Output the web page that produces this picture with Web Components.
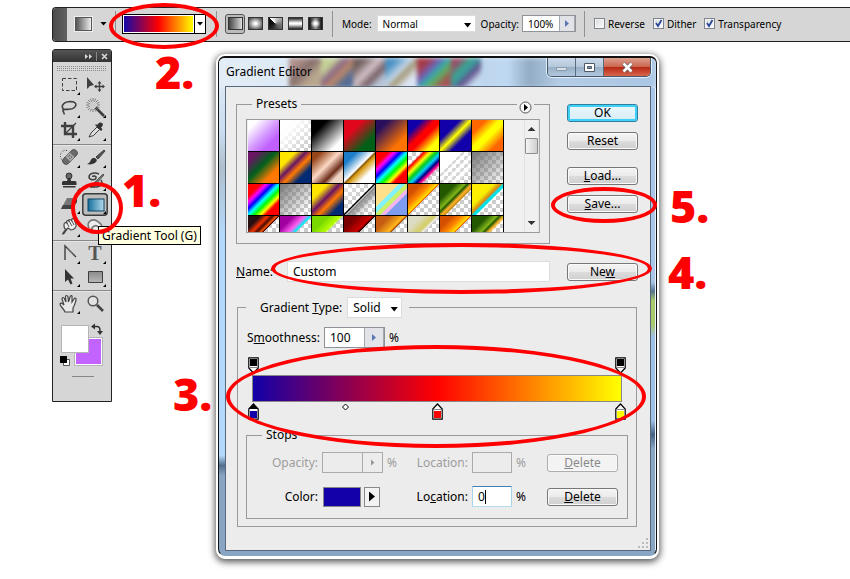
<!DOCTYPE html>
<html lang="en">
<head>
<meta charset="utf-8">
<title>Gradient Editor</title>
<style>
body{margin:0;background:#fff;color:#000;font:12px/16px "Noto Sans","Open Sans",sans-serif;overflow:hidden}
</style>
</head>
<body>
<work-desktop></work-desktop>
<script>
const define=(name,html,setup)=>customElements.define(name,class extends HTMLElement{
  connectedCallback(){
    if(this.shadowRoot)return;
    const t=document.createElement('template');
    t.innerHTML='<style>*{box-sizing:border-box}button,input,select{font:inherit;color:inherit;margin:0}</style>'+html;
    this.attachShadow({mode:'open'}).append(t.content.cloneNode(true));
    if(setup)setup(this,this.shadowRoot);
  }
});

/* ---------- shared controls ---------- */
define('push-button',`<style>
:host{display:block;height:18px}
button{display:block;width:100%;height:18px;padding:0;line-height:16px;border:1px solid #777;border-radius:3px;background:linear-gradient(#f4f4f4,#ebebeb 48%,#dcdcdc 52%,#cfcfcf);box-shadow:inset 0 0 0 1px #fafafa;color:#000}
:host([primary]) button{border-color:#2f7f9f;box-shadow:inset 0 0 0 2px #3fd0f8;background:linear-gradient(#eef8fd,#d5ecf6)}
:host([off]) button{border-color:#adadad;background:#f3f3f3;color:#8a8a8a}
</style><button type="button"><slot></slot></button>`,(h,r)=>{if(h.hasAttribute('off'))r.querySelector('button').disabled=true});

define('spin-field',`<style>
:host{display:block}
label{display:flex;align-items:center;gap:var(--gap,4px)}
.box{display:flex;width:var(--w,61px);height:var(--h,21px);border:1px solid #8f9399;background:#fff}
input{flex:1;min-width:0;border:0;outline:0;padding:0 0 0 5px;background:transparent}
button{width:var(--b,20px);padding:0;border:1px solid #a3a8ae;border-width:0 1px 0 1px;background:#e1e3e8;display:grid;place-items:center}
i{width:4px;height:7px;background:#5b76b5;clip-path:polygon(0 0,100% 50%,0 100%)}
</style><label><span><slot></slot></span><span class="box"><input><button type="button" aria-label="Slider"><i></i></button></span><slot name="unit"></slot></label>`,
(h,r)=>{r.querySelector('input').value=h.getAttribute('value')||''});

define('choice-field',`<style>
:host{display:block}
label{display:flex;align-items:center;gap:5px}
.box{position:relative;width:var(--w);height:var(--h)}
select{appearance:none;width:100%;height:100%;padding:0 0 0 var(--pl,5px);border:1px solid #dcdcdc;border-radius:0;background:#fff;outline:0}
.box::after{content:"";position:absolute;right:4px;top:50%;margin-top:-1px;width:8px;height:5px;background:#000;clip-path:polygon(0 0,100% 0,50% 100%);pointer-events:none}
</style><label><span><slot></slot></span><span class="box"><select></select></span></label>`,
(h,r)=>{r.querySelector('select').add(new Option(h.getAttribute('value')))});

define('check-option',`<style>
:host{display:block}
label{display:flex;align-items:center;gap:3px}
input{appearance:none;width:11px;height:11px;border:1px solid #7d868f;background:linear-gradient(135deg,#d5d9de,#fff);box-shadow:inset 0 0 0 1px #f6f6f6}
.b{display:grid;place-items:center}
.b>*{grid-area:1/1}
svg{display:none;pointer-events:none}
input:checked+svg{display:block}
</style><label><span class="b"><input type="checkbox"><svg width="9" height="9"><path d="M2 4l2 3 3.500-6" fill="none" stroke="#2c4899" stroke-width="1.800"/></svg></span><slot></slot></label>`,
(h,r)=>{r.querySelector('input').checked=h.hasAttribute('on')});

/* ---------- options bar ---------- */
define('options-bar',`<style>
:host{display:flex;height:35px;border:1px solid #222;border-right:0;border-radius:4px 0 0 4px;background:#d6d6d6;font-size:10px;align-items:center;overflow:hidden;white-space:nowrap;padding-bottom:2px}
.grip{align-self:stretch;width:14px;margin-bottom:-2px;background:linear-gradient(90deg,#4c4c4c,#626262)}
.preset{display:flex;align-items:center;gap:8px;padding:0 9px 0 8px;border:0;background:none}
.preset i{width:17px;height:14px;border:1px solid #555;background:linear-gradient(90deg,#555,#eee);box-shadow:0 0 0 1px #eee}
b{width:7px;height:4px;background:#000;clip-path:polygon(0 0,100% 0,50% 100%)}
hr{width:1px;height:26px;margin:0;border:0;background:#909090}
.ramp{display:flex;margin:0 10px 0 6px;width:84px;height:20px;padding:0;border:1px solid #000;background:#fff}
.ramp i{flex:1;margin:1px;background:linear-gradient(90deg,#1408a8,#f00 50%,#ff0)}
.ramp span{width:11px;display:grid;place-items:center;border-left:1px solid #000}
.preset{margin-right:-1px}
.kinds{display:flex;align-items:center;padding:0 7px 0 8px}
.kinds button{width:20px;height:20px;padding:0;border:1px solid transparent;border-radius:3px;background:none;display:grid;place-items:center}
.kinds button.on{border-color:#555;background:#bbb}
.kinds i{width:15px;height:13px;border:1px solid #333}
.mode{--w:99px;--h:17px;margin-left:9px}
.op{--w:54px;--h:17px;--b:16px;--gap:3px;margin:0 8px 0 5px}
.checks{display:flex;gap:8px;margin-left:9px}
</style>
<div class="grip"></div>
<button class="preset" type="button" aria-label="Tool preset"><i></i><b></b></button><hr>
<button class="ramp" type="button" aria-label="Edit gradient"><i></i><span><b></b></span></button><hr>
<div class="kinds">
<button class="on" type="button" aria-label="Linear"><i style="background:linear-gradient(90deg,#444,#ddd)"></i></button>
<button type="button" aria-label="Radial"><i style="background:radial-gradient(#fff 10%,#555 85%)"></i></button>
<button type="button" aria-label="Angle"><i style="background:conic-gradient(from -45deg,#fff 0,#777 40%,#111 85%,#111)"></i></button>
<button type="button" aria-label="Reflected"><i style="background:linear-gradient(#222,#fff 45% 55%,#222)"></i></button>
<button type="button" aria-label="Diamond"><i style="background:radial-gradient(#fff 10%,transparent 55%),linear-gradient(90deg,#111,#999,#111)"></i></button>
</div><hr>
<choice-field class="mode" value="Normal">Mode:</choice-field>
<spin-field class="op" value="100%">Opacity:</spin-field><hr>
<div class="checks"><check-option>Reverse</check-option><check-option on>Dither</check-option><check-option on>Transparency</check-option></div>`);

/* ---------- tool box ---------- */
const D='#3f3f3f';
const tools={
marquee:['Marquee',`<path d="M6.500 4.500h14v12h-14z" fill="none" stroke="${D}" stroke-dasharray="3.500 2"/>`],
move:['Move',`<path d="M5 3v12l3-3 4-1z" fill="${D}"/><path d="M17.500 8v9M13 12.500h9" stroke="${D}" stroke-width="1.300"/><path d="M15.500 9.500l2-2.500 2 2.500zM15.500 15.500l2 2.500 2-2.500zM14.500 10.500l-2.500 2 2.500 2zM20.500 10.500l2.500 2-2.500 2z" fill="${D}"/>`,1],
lasso:['Lasso',`<path d="M9 13C4 11 6 5 14 4.500c9 0 7 7-1 7.800-3 .4-5-.6-6 .7s2 2.500 1 4.500" fill="none" stroke="${D}" stroke-width="1.600"/>`],
wand:['Magic Wand',`<path d="M12 9l10 10" stroke="${D}" stroke-width="2.600"/><circle cx="11" cy="8" r="3.500" fill="#ddd"/><path d="M11 1v14M4 8h14M6 3l10 10M16 3L6 13M8.300 1.500l5.400 13M13.700 1.500l-5.400 13M4.500 5.300l13 5.400M4.500 10.700l13-5.400" stroke="#6b6b6b" stroke-width=".8" stroke-dasharray="3.500 7.500"/><circle cx="11" cy="8" r="3" fill="#ccc"/>`],
crop:['Crop',`<path d="M9 2v12h12M5 6h12v12" fill="none" stroke="${D}" stroke-width="2.400"/><path d="M9 14L20 3" stroke="${D}" stroke-width="1.200"/>`],
dropper:['Eyedropper',`<path d="M7 17l2-4 6-6 2.500 2.500-6 6z" fill="#ddd" stroke="${D}"/><path d="M13 5l6 6 1.500-1.500-1.500-2c3-2 2-5-.5-5-2 0-2.500 1.500-3.500 2.500l-.8-.8z" fill="#333"/>`],
heal:['Healing Brush',`<path d="M11 3.500c-5-1-7 3-6.500 6s2 5 4 5.500" fill="none" stroke="${D}" stroke-dasharray="1 1.500"/><g transform="rotate(-45 14 10)"><rect x="5" y="6.500" width="18" height="7" rx="3.500" fill="#6b6b6b" stroke="#444" stroke-width=".8"/><rect x="11" y="6.500" width="6" height="7" fill="#aaa"/><path d="M12.500 8.500h3M12.500 11h3" stroke="#444" stroke-dasharray="1 1"/></g>`],
brush:['Brush',`<path d="M14 10l8-7 1 1-7 8z" fill="#555" stroke="${D}"/><path d="M5 17c4-1 3-5 6-6 3-.5 5 2 3 4s-6 3-9 2z" fill="#333"/>`],
stamp:['Clone Stamp',`<circle cx="13" cy="6" r="3" fill="#666" stroke="#333"/><path d="M12 8h2.500l.5 3h4q1.500 0 1.500 1.500V15H6v-2.500Q6 11 7.500 11H11zM7 16h12.500v1.500H7z" fill="#333"/>`],
history:['History Brush',`<path d="M17 4c-4-2-10-1-10 3 0 3 6 4 7 1 .5-2-3-3-3.500-1M8 17h7c5-1 6-4 4-7" fill="none" stroke="${D}" stroke-width="1.500"/><path d="M12 13l9-9 1 1-8 9z" fill="#777" stroke="#333" stroke-width=".7"/><path d="M8 17c2-1 2-4 5-3 2 1 0 4-5 3z" fill="#333"/>`],
eraser:['Eraser',`<path d="M5 16l6-11h10l-5 11z" fill="#777"/><path d="M5 16l2-4h10l-2 4z" fill="#444"/><path d="M17 12l4-7v4l-5 7z" fill="#333"/>`],
gradient:['Gradient',`<defs><linearGradient id="g"><stop stop-color="#146f9d"/><stop offset="1" stop-color="#b5dced"/></linearGradient></defs><rect x=".8" y=".8" width="24.400" height="21.400" rx="3" fill="#bcbcbc" stroke="#3a3a3a" stroke-width="1.500"/><rect x="6" y="6" width="16" height="12" fill="url(#g)" stroke="#0d4460"/>`],
smudge:['Smudge',`<path d="M7 17c-1 2 1 1 2-1l3-4 3 2c3 0 6-3 5-6L18 3c-2-1-3 0-2 2-2-2-4-2-3 0-2-1-3 0-2 2-2-1-3 0-3 2 0 3 1 4 2 4z" fill="#eee" stroke="#444" stroke-width="1.200"/><path d="M13 5l3 5M11 7l2 4M16 5l2 4" stroke="#555"/>`],
dodge:['Dodge',`<path d="M7 12c-3-6 3-10 8-7s6 6 4 9-8 3-9 0 4-6 6-3" fill="#eee" stroke="#777" stroke-width="1.600"/>`],
pen:['Pen',`<path d="M9 17V3l11 11" fill="none" stroke="${D}" stroke-width="1.400"/><path d="M10 4l9 8-5-3z" fill="#777"/>`],
type:['Type',`<text x="13" y="17" text-anchor="middle" font-family="Liberation Serif,serif" font-size="20" font-weight="700" fill="#555">T</text>`],
select:['Path Selection',`<path d="M9 3v13l3-2.500 2.500 5 2-1-2-5H18z" fill="#333"/>`],
shape:['Rectangle',`<defs><linearGradient id="s" x2="0" y2="1"><stop stop-color="#8b8b8b"/><stop offset="1" stop-color="#b7b7b7"/></linearGradient></defs><path d="M6.500 5.500h14v11h-14z" fill="url(#s)" stroke="${D}"/>`],
hand:['Hand',`<path d="M9 19c-1-3-5-6-5-8 1-2 3 0 4 1L6 6c0-2 2-2 2.500 0L10 9 9.500 4c0-2 2-2 2.500 0l.5 5L14 4c.5-2 2.500-1.500 2 0v5l2-3c1-1.500 2.500-.5 2 1-1 4-1 5-3 8v4z" fill="#e8e8e8" stroke="#444" stroke-width="1.200"/>`],
zoom:['Zoom',`<path d="M15 12l6 6" stroke="#444" stroke-width="2.600"/><circle cx="11" cy="8" r="4.800" fill="#e3e3e3" stroke="#555" stroke-width="1.500"/>`,1]};

define('tool-button',`<style>
:host{display:block}
button{display:block;width:100%;height:23px;padding:0;border:0;background:none}
svg{display:block}
</style><button type="button"></button>`,(h,r)=>{
  const [label,art,plain]=tools[h.getAttribute('tool')],b=r.querySelector('button');
  b.setAttribute('aria-label',label);
  b.innerHTML=`<svg width="26" height="23">${art}${plain?'':'<path d="M24 18v3h-3z" fill="#000"/>'}</svg>`;
});

define('tool-box',`<style>
:host{display:block;border:1px solid #222;border-radius:3px 3px 0 0;background:#d6d6d6}
header{display:flex;height:12px;align-items:center;justify-content:flex-end;background:linear-gradient(#555,#333);padding-right:3px}
.dots{display:block;margin:4px auto 3px}
.group{display:grid;grid-template-columns:26px 26px;padding:0 3px 1px}
.group+.group{border-top:1px solid #888;box-shadow:inset 0 1px #e6e6e6;padding-top:2px}
.colors{display:block;margin:2px auto 0;width:50px}
</style>
<header><svg width="24" height="9"><path d="M1 2l3 2.500L1 7zM5 2l3 2.500L5 7z" fill="#ddd"/><path d="M12.500 0v9" stroke="#888"/><path d="M18 2l5 5M23 2l-5 5" stroke="#ddd" stroke-width="1.500"/></svg></header>
<svg class="dots" width="50" height="5"><path d="M0 .5h50M0 2.500h50M0 4.500h50" stroke="#8a8a8a" stroke-dasharray="1 1"/></svg>
<div class="group"></div><div class="group"></div><div class="group"></div><div class="group"></div>
<svg class="colors" width="50" height="82">
<path d="M18.500 19.500h26v26h-26z" fill="#c263ff" stroke="#fff"/><path d="M17.500 18.500h28v28h-28z" fill="none" stroke="#b5b5b5"/>
<path d="M4.500 6.500h27v27h-27z" fill="#fff" stroke="#b5b5b5"/>
<path d="M37 7.500h3q3 0 3 4v3" fill="none" stroke="#333" stroke-width="1.500"/><path d="M34 7.500l4-3v6zM40 12h6l-3 4z" fill="#333"/>
<path d="M6.500 40.500h6v6h-6z" fill="#fff" stroke="#555"/><path d="M3 37h7v7H3z" fill="#000"/>
<path d="M15 57.500h22" stroke="#888"/>
</svg>`,(h,r)=>{
  const sets=[['marquee','move','lasso','wand','crop','dropper'],['heal','brush','stamp','history','eraser','gradient','smudge','dodge'],['pen','type','select','shape'],['hand','zoom']];
  r.querySelectorAll('.group').forEach((g,i)=>g.innerHTML=sets[i].map(t=>`<tool-button tool="${t}"></tool-button>`).join(''));
});

/* ---------- preset list ---------- */
const rainbow='#f00,#f00 20%,#f0f 30%,#00f 40%,#0ff 50%,#0f0 60%,#ff0 70%,#f00 78%';
const presets=[
'#fff 15%,#d59bff 50%,#c060ff 75%','#fff 25%,#fff0 90%','#000 25%,#fff 80%','#e2061c 30%,#006018 75%','#28105c 20%,#ff7300 75%','#1000aa 22%,#f00 45% 55%,#ff0 80%','#1200a8 32%,#ff0 50%,#1200a8 68%','#f60 22%,#ff0 45% 55%,#f60 80%',
'#6a1565 15%,#00601c 45%,#ff7900 75%','#ffe600 25%,#6a1565 42%,#ff7900 56%,#002a74 75%','#97461a 15%,#fbd8c5 45%,#6c2d1a 68%,#f0d5c5 80%','#1c7cc8 20%,#fff 48%,#82550a 51%,#d89a12 56%,#fff 75%',rainbow,'#fff0 22%,#f00 26%,#ff0 36%,#0c2 46%,#0cf 55%,#008 63%,#f08 70%,#fff0 76%','#fff 35%,#fff0 38%,#fff 44%,#fff0 50%,#fff 58%,#fff0 64%,#fff 70%,#fff0 80%','#777,#7770 100%',
rainbow,'#777,#7770 85%','#ffe600 25%,#6a1565 45%,#ff7900 60%,#002a74 80%','#fff8 0,#fff0 47%,#000 49% 51%,#fff 52%,#888 54%,#ccc0 78%','#ffe08a 36%,#7ef3ff 38% 46%,#c8f06a 48% 56%,#f6b4ef 58% 64%,#7f9df0 66%','#d45000 20%,#f80 36%,#ffdc00 47%,#e60 50%,#fff0 51%','#245800 25%,#82b619 40%,#245800 45%,#ffb428 52%,#c88a18 58%,#fff0 60%','#ffef00 22%,#f8ef00 35%,#d78618 47%,#00e4e9 51% 55%,#fff0 58%',
'#281010 20%,#f33000 32%,#4b0b00 40%,#f50 47%,#400 50%,#fff0 51%','#a100a1 22%,#ff5df2 40%,#06f1f4 50%,#fff0 53%','#79d800 26%,#b6ff00 47%,#fff0 51%','#700 20%,#c00 45%,#300 50%,#fff0 51%','#c45c12 22%,#ffb81c 46%,#a40 50%,#fff0 51%','#dcdcc4 22%,#d4cc62 43%,#eee 50%,#fff0 52%','#d45000 20%,#f80 36%,#ffdc00 47%,#e60 50%,#fff0 51%','#245800 25%,#82b619 40%,#245800 45%,#ffb428 52%,#fff0 58%'];
define('preset-list',`<style>
:host{display:flex;height:114px;border:1px solid #9a9a9a;border-right-color:#aaa;background:#f0f0f0;overflow:hidden}
.tiles{display:grid;grid-template-columns:repeat(8,32px);grid-auto-rows:32px;padding-left:1px;flex:1;height:112px;overflow:hidden}
.tiles button{padding:0;border:0;border-right:1px solid #000;border-bottom:1px solid #000;background-origin:padding-box}
.bar{width:15px;display:flex;flex-direction:column;align-items:center;border-left:1px solid #e2e2e2;border-right:1px solid #e2e2e2;padding:7px 0}
.bar button{width:8px;height:4px;padding:0;border:0;background:#333;clip-path:polygon(50% 0,100% 100%,0 100%)}
.bar button:last-child{clip-path:polygon(0 0,100% 0,50% 100%)}
.thumb{width:13px;height:16px;margin:7px 0 auto;border:1px solid #8d8d8d;border-radius:1px;background:linear-gradient(90deg,#f5f5f5,#cfcfcf)}
</style><div class="tiles"></div><div class="bar"><button type="button" aria-label="Scroll up"></button><div class="thumb"></div><button type="button" aria-label="Scroll down"></button></div>`,(h,r)=>{
  presets.forEach((p,i)=>{const b=document.createElement('button');b.type='button';b.setAttribute('aria-label','Preset '+(i+1));
    b.style.background=`linear-gradient(135deg,${p}) 0 0/31px 31px no-repeat,repeating-conic-gradient(#ccc 0 25%,#fff 0 50%) 0 0/8px 8px`;
    r.querySelector('.tiles').append(b)});
});

/* ---------- ramp with its stops ---------- */
define('ramp-stop',`<style>:host{display:block;width:11px;height:17px}svg{display:block}:host([down]) svg{transform:rotate(180deg)}</style><svg width="11" height="17"></svg>`,(h,r)=>{
  const c=h.getAttribute('color'),on=h.hasAttribute('active');
  r.querySelector('svg').innerHTML=`<path d="M.8 6L5.500 1l4.700 5v10.200H.8z" fill="#fff" stroke="#000" stroke-width="1.200"/>${on?'<path d="M.8 6L5.500 1l4.700 5z"/>':'<path d="M1 6.500h9" stroke="#888"/>'}<path d="M2 8h7v7H2z" fill="${c}"/>`;
});
define('gradient-ramp',`<style>
:host{display:block}
.track{display:flex;justify-content:space-between}
.top{height:18px}
.ramp{height:27px;margin:0 4px 1px 4px;border:1px solid #888;background:linear-gradient(90deg,#1200a8,#f00 50%,#ff0)}
.mid{width:11px;height:8px}
</style>
<div class="track top"><ramp-stop down color="#000"></ramp-stop><ramp-stop down color="#000"></ramp-stop></div>
<div class="ramp"></div>
<div class="track"><ramp-stop active color="#1200a8"></ramp-stop><svg class="mid"><path d="M5.500 1L8.500 4l-3 3-3-3z" fill="#fff" stroke="#000"/></svg><ramp-stop color="#f00"></ramp-stop><span class="mid"></span><ramp-stop color="#ff0"></ramp-stop></div>`);

/* ---------- stops group ---------- */
define('stops-panel',`<style>
:host{display:block}
fieldset{margin:0;min-width:0;border:1px solid #999;padding:9px 9px 11px 0}
legend{margin-left:15px;padding:0 4px}
.grid{display:grid;grid-template-columns:71px 61px 12px 65px 40px 1fr 71px;column-gap:4px;row-gap:13px;align-items:center}
.r{text-align:right}
.off{color:#9d9d9d}
.box{display:flex;width:61px;height:21px;border:1px solid #aaa;background:#ececec}
.box input{flex:1;min-width:0;border:0;padding:0}
.box button{width:20px;padding:0;border:0;border-left:1px solid #aaa;background:#ececec;display:grid;place-items:center}
.box i{width:4px;height:7px;background:#999;clip-path:polygon(0 0,100% 50%,0 100%)}
input{width:100%;height:21px;padding:0 0 0 5px;border:1px solid #aaa;background:#ececec;outline:0}
.box input{height:auto}
.live{border-color:#3c7fb1 #a9d3ea #b5dcef;background:linear-gradient(#000,#000) 12px 3px/1px 14px no-repeat #fff}
.pick{display:flex;gap:3px;height:20px;padding-left:1px}
.pick button{padding:0;border:1px solid #888;background:#f3f3f3;width:16px;display:grid;place-items:center}
.pick .color{width:38px;background:#1200a8}
.pick i{width:6px;height:10px;background:#000;clip-path:polygon(0 0,100% 50%,0 100%)}
</style><fieldset><legend>Stops</legend><div class="grid">
<label class="r off" for="o">Opacity:</label><span class="box"><input id="o" disabled><button type="button" disabled aria-label="Slider"><i></i></button></span><span class="off">%</span>
<label class="r off" for="l1">Location:</label><input id="l1" disabled><span class="off">%</span><push-button off><u>D</u>elete</push-button>
<label class="r" for="c">Color:</label><span class="pick"><button class="color" id="c" type="button"></button><button type="button" aria-label="Color menu"><i></i></button></span><span></span>
<label class="r" for="l2">Lo<u>c</u>ation:</label><input id="l2" class="live" value="0"><span>%</span><push-button><u>D</u>elete</push-button>
</div></fieldset>`);

/* ---------- dialog ---------- */
define('gradient-editor',`<style>
:host{display:block;width:max-content;border:2px solid #fff;border-bottom-width:3px;border-radius:9px;box-shadow:0 2px 7px 1px #000a;background:#fff}
.glass{position:relative;border:1px solid #111;border-top-width:2px;border-bottom-color:#88a5c4;border-radius:7px;padding:0 5px 4px 6px;overflow:hidden;background:linear-gradient(#dce8f4 0 5%,#c9dcf0 15%,#b0bfcc 22%,#b4d8fa 35% 80%,#536f8e 82%,#88a5c4 84%)}
.glass::after{content:"";position:absolute;right:0;top:30px;bottom:5px;width:5px;background:linear-gradient(#a9c6e8 42%,#56748e 44%,#aac96a 46% 51%,#9fc0e5 54% 72%,#446183 75%,#88a5c4 78%);border-right:1px solid #e8f2fc}
.blur{position:absolute;inset:0 0 auto;height:30px;filter:blur(2px);background:
linear-gradient(135deg,#b0908b 20%,#87706b 45%,#b8a78f 70%) 70px 0/32px 30px no-repeat,
linear-gradient(135deg,#c5d096 25%,#8a6788 42%,#bd8966 58%,#536b94 76%) 102px 0/32px 30px no-repeat,
linear-gradient(135deg,#73605f 20%,#d4c4ca 45%,#735a60 65%,#b9c4d5 80%) 134px 0/32px 30px no-repeat,
linear-gradient(135deg,#4b91c2 20%,#c7d9e9 45%,#a2936f 55%,#dbe5f2 75%) 166px 0/32px 30px no-repeat,
linear-gradient(135deg,#a63947 20%,#7160b6 38%,#35a7ad 50%,#66a95c 64%,#a45454 80%) 198px 0/34px 30px no-repeat,
linear-gradient(135deg,#9b4d66 20%,#35a590 38%,#41959d 50%,#604d89 62%,#c3d9ee 80%) 230px 0/32px 30px no-repeat,
linear-gradient(90deg,#e3edf6,#d6e5f3 30%,#bdd5ec 60%,#bfd9f2 66%,#93acc5 71%,#b4cce5 78%,#a9c6e3)}
header{position:relative;z-index:1;display:flex;height:28px;align-items:flex-start}
h1{flex:1;margin:0;padding:6px 0 0 1px;font:inherit;}
.ctl{display:flex;height:19px;border:1px solid #455768;border-top:0;border-radius:0 0 5px 5px;overflow:hidden;box-shadow:0 0 0 1px #e2eefa}
.ctl button{width:28px;padding:0;border:0;border-right:1px solid #5b6d80;background:linear-gradient(#cbdaea,#b5c8db 48%,#98afc5 52%,#b1c8de);display:grid;place-items:center}
.ctl .x{width:46px;border:0;background:linear-gradient(#dca090,#cd6750 48%,#b72914 52%,#d9664d)}
.client{position:relative;z-index:1;border:1px solid #56687a;background:#ececec;padding:9px 12px 0 10px}
.cols{display:grid;grid-template-columns:314px 71px;column-gap:17px}
fieldset{position:relative;margin:0;min-width:0;border:1px solid #999}
.presets{padding:7px 9px 10px}
.presets legend{margin-left:6px;padding:0 4px}
.more{position:absolute;top:-11px;right:15px;width:17px;height:13px;padding:0;border:0;background:#ececec}
.more svg{display:block;margin:0 auto}
.side{display:flex;flex-direction:column;gap:10px;padding-top:8px}
.side .load{margin-top:7px}
.name{margin-top:17px;align-items:center}
.name label{display:flex;align-items:center}
.name label>span{width:51px}
.name input{flex:1;min-width:0;height:21px;padding:0 0 0 5px;border:1px solid #ddd;background:#fff;outline:0}
.type{margin:15px 1px 0;padding:9px 8px 7px}
.type>legend{margin-left:0;padding:0 7px 0 14px;--w:55px;--h:21px}
.type>spin-field{width:max-content;margin-left:1px}
.type gradient-ramp{margin:9px 2px 7px}
footer{display:flex;justify-content:flex-end;height:23px;margin-right:-11px;align-items:flex-end}
</style>
<div class="glass"><div class="blur"></div>
<header><h1>Gradient Editor</h1><div class="ctl">
<button type="button" aria-label="Minimize"><svg width="13" height="10"><path d="M1.500 5.500h10v3h-10z" fill="#d8e1ea" stroke="#899baa"/></svg></button>
<button type="button" aria-label="Maximize"><svg width="13" height="11"><path d="M1.500 1.500h10v8h-10z" fill="#fff" stroke="#4d5b69"/><path d="M4.500 4.500h4v2h-4z" fill="#89a" stroke="#4d5b69"/></svg></button>
<button class="x" type="button" aria-label="Close"><svg width="13" height="11"><path d="M2.500 1.500l8 8M10.500 1.500l-8 8" stroke="#666" stroke-width="4"/><path d="M2.500 1.500l8 8M10.500 1.500l-8 8" stroke="#fff" stroke-width="2.500"/></svg></button></div></header>
<div class="client">
<div class="cols"><fieldset class="presets"><legend>Presets</legend><button class="more" type="button" aria-label="Preset menu"><svg width="13" height="13"><circle cx="6.500" cy="6.500" r="5.500" fill="#f8f8f8" stroke="#555"/><path d="M5 3l4 3.500L5 10z"/></svg></button><preset-list></preset-list></fieldset>
<div class="side"><push-button primary>OK</push-button><push-button>Reset</push-button><push-button class="load"><u>L</u>oad...</push-button><push-button><u>S</u>ave...</push-button></div></div>
<div class="cols name"><label><span><u>N</u>ame:</span><input value="Custom"></label><push-button>Ne<u>w</u></push-button></div>
<fieldset class="type"><legend><choice-field value="Solid">Gradient <u>T</u>ype:</choice-field></legend>
<spin-field value="100">S<u>m</u>oothness:<span slot="unit">%</span></spin-field>
<gradient-ramp></gradient-ramp><stops-panel></stops-panel></fieldset>
<footer><svg width="12" height="12"><path d="M9 1h2M9 5h2M9 9h2M5 5h2M5 9h2M1 9h2" stroke="#bbb" stroke-width="2"/></svg></footer>
</div></div>`);

/* ---------- annotations ---------- */
define('mark-ring',`<style>:host{position:absolute;border:4px solid #f00;border-radius:50%;pointer-events:none;z-index:4}</style>`,h=>{
  const [x,y,w,t]=h.getAttribute('box').split(' ');Object.assign(h.style,{left:x+'px',top:y+'px',width:w+'px',height:t+'px',boxSizing:'border-box'});
});
define('mark-number',`<style>:host{position:absolute;color:#f00;font:800 45px/45px "Open Sans",sans-serif;pointer-events:none;z-index:4}</style><slot></slot>`,h=>{
  const [x,y]=h.getAttribute('at').split(' ');h.style.left=x+'px';h.style.top=y+'px';
});

define('work-desktop',`<style>
:host{display:block;position:relative;padding:7px 0 0 52px}
.windows{display:flex;align-items:flex-start}
tool-box{margin-top:7px}
gradient-editor{margin:12px 0 24px 104px}
.tip{position:absolute;left:98px;top:226px;padding:0 3px;border:1px solid #000;background:#ffffe1;z-index:3;line-height:17px}
</style>
<options-bar></options-bar>
<div class="windows"><tool-box></tool-box><gradient-editor></gradient-editor></div>
<mark-ring box="71 182 52 52"></mark-ring><mark-ring box="109 3 110 46"></mark-ring><mark-ring box="226 345 420 103"></mark-ring><mark-ring box="271 243 381 51"></mark-ring><mark-ring box="551 187 106 36"></mark-ring>
<div class="tip" role="tooltip">Gradient Tool (G)</div>
<mark-number at="122 167">1.</mark-number><mark-number at="155 49">2.</mark-number><mark-number at="173 371">3.</mark-number><mark-number at="668 249">4.</mark-number><mark-number at="670 183">5.</mark-number>`);
</script>
</body>
</html>
